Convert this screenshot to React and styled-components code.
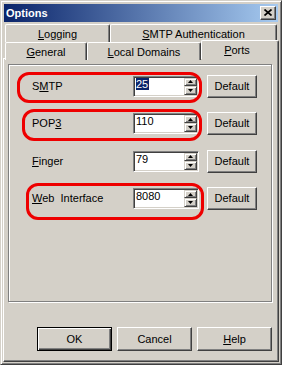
import React from 'react';
import styled, { createGlobalStyle } from 'styled-components';

const Global = createGlobalStyle`
  html, body { margin: 0; padding: 0; background: #d4d0c8; }
  body {
    font-family: "Liberation Sans", Arial, sans-serif;
    font-size: 11px;
    color: #000;
  }
  * { box-sizing: border-box; }
`;

const Window = styled.div`
  width: 282px;
  height: 365px;
  background: #d4d0c8;
  border: 1px solid;
  border-color: #d4d0c8 #404040 #404040 #d4d0c8;
  box-shadow: inset 1px 1px #fff, inset -1px -1px #808080;
  padding: 2px;
  display: flex;
  flex-direction: column;
`;

const TitleBar = styled.div`
  height: 18px;
  margin: 1px 1px 0 1px;
  background: linear-gradient(to right, #0a246a, #a6caf0);
  display: flex;
  align-items: center;
  justify-content: space-between;
  padding: 0 2px 0 2px;
`;

const Title = styled.span`
  color: #fff;
  font-weight: bold;
  font-size: 11px;
  line-height: 13px;
`;

const CloseButton = styled.div`
  width: 16px;
  height: 14px;
  background: #d4d0c8;
  border: 1px solid;
  border-color: #fff #404040 #404040 #fff;
  box-shadow: inset -1px -1px #808080;
  display: flex;
  align-items: center;
  justify-content: center;
  padding: 0 1px 1px 0;
`;

const Tabs = styled.div`
  margin-top: 2px;
  display: flex;
  flex-direction: column;
`;

const TabRow = styled.div`
  display: flex;
  padding-left: 2px;
  height: ${p => p.$h}px;
  position: relative;
  z-index: 1;
`;

const Tab = styled.div`
  width: ${p => p.$w}px;
  height: ${p => (p.$selected ? 19 : 18)}px;
  margin-top: ${p => (p.$selected ? -2 : 0)}px;
  background: #d4d0c8;
  border-top: 1px solid #fff;
  border-left: 1px solid #fff;
  border-right: 1px solid #404040;
  box-shadow: inset -1px 0 #808080;
  border-radius: 2px 2px 0 0;
  display: flex;
  justify-content: center;
  padding-top: 3px;
  padding-right: ${p => (p.$selected ? 6 : 0)}px;
  line-height: 13px;
  white-space: nowrap;
`;

const Panel = styled.div`
  flex: 1;
  border: 1px solid;
  border-color: #fff #404040 #404040 #fff;
  box-shadow: inset -1px -1px #808080;
  padding: 5px 0 0 4px;
  display: flex;
  flex-direction: column;
`;

const PortBox = styled.div`
  width: 264px;
  height: 238px;
  border: 1px solid #808080;
  box-shadow: inset 1px 1px #fff, 1px 1px #fff;
  padding: 9px 0 0 23px;
  display: grid;
  grid-template-rows: repeat(4, 24px);
  row-gap: 13.5px;
  align-content: start;
`;

const Row = styled.div`
  display: flex;
  align-items: center;
  position: relative;
  height: 24px;
`;

const Label = styled.span`
  width: 101px;
  line-height: 13px;
  white-space: pre;
`;

const SpinEdit = styled.div`
  width: 66px;
  height: 21px;
  background: #fff;
  border: 1px solid;
  border-color: #808080 #fff #fff #808080;
  box-shadow: inset 1px 1px #404040, inset -1px -1px #d4d0c8;
  padding: 1px;
  display: flex;
`;

const Value = styled.div`
  flex: 1;
  padding: 0 0 0 1px;
  line-height: 13px;
`;

const Selected = styled.span`
  background: #0a246a;
  color: #fff;
  padding-right: 1px;
`;

const Spin = styled.div`
  width: 13px;
  display: flex;
  flex-direction: column;
`;

const SpinButton = styled.div`
  flex: ${p => p.$grow};
  background: #d4d0c8;
  border: 1px solid;
  border-color: #d4d0c8 #404040 #404040 #d4d0c8;
  box-shadow: inset 1px 1px #fff, inset -1px -1px #808080;
  display: flex;
  align-items: center;
  justify-content: center;
`;

const Button = styled.div`
  width: ${p => p.$w}px;
  height: ${p => p.$h}px;
  margin-left: ${p => p.$ml || 0}px;
  background: #d4d0c8;
  border: 1px solid;
  border-color: ${p => (p.$default ? '#000' : '#fff #404040 #404040 #fff')};
  box-shadow: ${p =>
    p.$default
      ? 'inset 1px 1px #fff, inset -1px -1px #404040, inset -2px -2px #808080'
      : 'inset -1px -1px #808080'};
  display: flex;
  align-items: center;
  justify-content: center;
  line-height: 13px;
`;

const ButtonBar = styled.div`
  margin-top: 25px;
  display: flex;
  justify-content: flex-end;
  gap: 5px;
  padding-right: 6px;
`;

const Highlight = styled.span`
  position: absolute;
  left: ${p => p.$x}px;
  top: ${p => p.$y}px;
  width: ${p => p.$w}px;
  height: ${p => p.$h}px;
  border: 3px solid #ee0000;
  border-radius: 12px;
  pointer-events: none;
`;

const Arrow = ({ up }) => (
  <svg width="5" height="3" viewBox="0 0 5 3">
    <polygon points={up ? '2.5,0 5,3 0,3' : '0,0 5,0 2.5,3'} fill="#000" />
  </svg>
);

const PortRow = ({ label, value, selected, ring }) => (
  <Row>
    <Label>{label}</Label>
    <SpinEdit>
      <Value>{selected ? <Selected>{value}</Selected> : value}</Value>
      <Spin>
        <SpinButton $grow={8}>
          <Arrow up />
        </SpinButton>
        <SpinButton $grow={9}>
          <Arrow />
        </SpinButton>
      </Spin>
    </SpinEdit>
    <Button $w={50} $h={23} $ml={8}>Default</Button>
    {ring && <Highlight $x={ring[0]} $y={ring[1]} $w={ring[2]} $h={ring[3]} />}
  </Row>
);

export default function App() {
  return (
    <>
      <Global />
      <Window>
        <TitleBar>
          <Title>Options</Title>
          <CloseButton>
            <svg width="8" height="7" viewBox="0 0 8 7">
              <path d="M0.5 0.5 L7.5 6.5 M7.5 0.5 L0.5 6.5" stroke="#000" strokeWidth="1.7" />
            </svg>
          </CloseButton>
        </TitleBar>
        <Tabs>
          <TabRow $h={18}>
            <Tab $w={105}><span><u>L</u>ogging</span></Tab>
            <Tab $w={167}><span><u>S</u>MTP Authentication</span></Tab>
          </TabRow>
          <TabRow $h={16}>
            <Tab $w={82}><span><u>G</u>eneral</span></Tab>
            <Tab $w={114}><span><u>L</u>ocal Domains</span></Tab>
            <Tab $w={78} $selected><span><u>P</u>orts</span></Tab>
          </TabRow>
        </Tabs>
        <Panel>
          <PortBox>
            <PortRow
              label={<>S<u>M</u>TP</>}
              value="25"
              selected
              ring={[-15, -2, 185, 31]}
            />
            <PortRow
              label={<>POP<u>3</u></>}
              value="110"
              ring={[-10, -3, 180, 32]}
            />
            <PortRow label={<><u>F</u>inger</>} value="79" />
            <PortRow
              label={<><u>W</u>eb  Interface</>}
              value="8080"
              ring={[-6, -4, 178, 37]}
            />
          </PortBox>
          <ButtonBar>
            <Button $w={75} $h={24} $default>OK</Button>
            <Button $w={75} $h={24}>Cancel</Button>
            <Button $w={75} $h={24}><span><u>H</u>elp</span></Button>
          </ButtonBar>
        </Panel>
      </Window>
    </>
  );
}
